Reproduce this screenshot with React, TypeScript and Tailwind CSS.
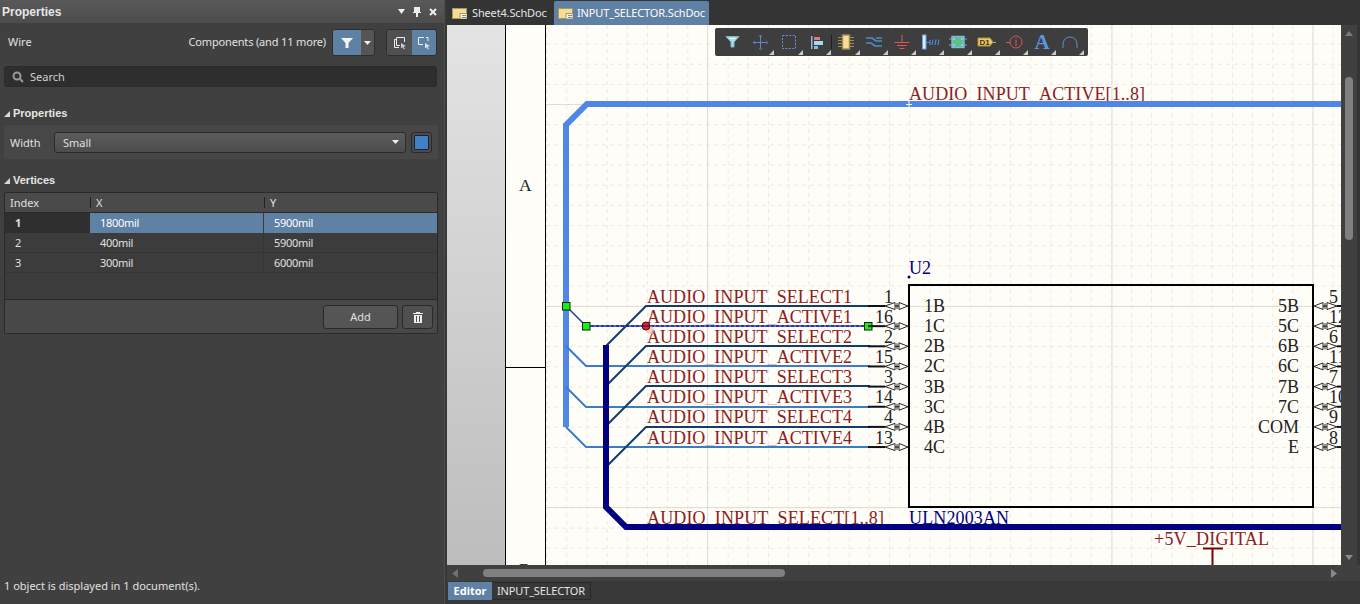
import type { ReactNode } from 'react'

const selectRows = [306, 346, 386, 427]
const activeRows = [366, 407, 447]
const netLabels = ['SELECT1', 'ACTIVE1', 'SELECT2', 'ACTIVE2', 'SELECT3', 'ACTIVE3', 'SELECT4', 'ACTIVE4']
const leftPins = [
  ['1', '1B'],
  ['16', '1C'],
  ['2', '2B'],
  ['15', '2C'],
  ['3', '3B'],
  ['14', '3C'],
  ['4', '4B'],
  ['13', '4C'],
]
const rightPins = [
  ['5', '5B'],
  ['12', '5C'],
  ['6', '6B'],
  ['11', '6C'],
  ['7', '7B'],
  ['10', '7C'],
  ['9', 'COM'],
  ['8', 'E'],
]
const vertices = [
  ['1', '1800mil', '5900mil'],
  ['2', '400mil', '5900mil'],
  ['3', '300mil', '6000mil'],
]
const serif = '"Liberation Serif", serif'
const arial = '"Liberation Sans", sans-serif'
const pinY = (i: number) => 306 + i * 20.15

function SectionTitle({ children }: { children: ReactNode }) {
  return (
    <div className="flex h-[14px] items-center gap-[3px] pl-[4px] text-[11px] font-bold leading-[14px] text-[#e6e6e6]" style={{ fontFamily: arial }}>
      <svg width="6" height="6" viewBox="0 0 6 6" className="mt-[1px]">
        <path d="M0 6 L6 0 V6 Z" fill="#d8d8d8" />
      </svg>
      {children}
    </div>
  )
}

function DocIcon() {
  return (
    <svg width="15" height="11" viewBox="0 0 15 11" className="shrink-0">
      <rect x="0.5" y="0.5" width="14" height="10" fill="#f6dd95" stroke="#a89868" />
      <rect x="8" y="5.5" width="7" height="5.5" fill="#fbf6df" stroke="#a89868" />
      <path d="M10 7.5 H14 M10 9.5 H14" stroke="#8f8a70" />
    </svg>
  )
}

function ToolIcon({ x, corner = true, children }: { x: number; corner?: boolean; children: ReactNode }) {
  return (
    <g transform={`translate(${x} 0)`}>
      {children}
      {corner && <path d="M9 13 L14 8 V13 Z" fill="#c9c9c9" />}
    </g>
  )
}

function Toolbar() {
  return (
    <div className="absolute left-[268px] top-[3px] h-[28px] w-[373px] rounded-[2px] bg-[#3e3e3e]">
      <svg width="373" height="28" viewBox="0 -14 373 28" className="block">
        <ToolIcon x={17.5} corner={false}>
          <path d="M-6.5 -5.5 H6.5 L1.5 0 V5 H-1.5 V0 Z" fill="#a6dbe8" stroke="#7fb4c4" />
          <path d="M-3 -3.5 H3" stroke="#e8f8fc" />
        </ToolIcon>
        <ToolIcon x={45}>
          <path d="M-6.5 0.5 H6.5 M0.5 -6.5 V6.5" stroke="#5f86d0" />
          <path d="M-5 -1 L-7 0.5 L-5 2 M6 -1 L8 0.5 L6 2 M-1 -5 L0.5 -7 L2 -5 M-1 6 L0.5 8 L2 6" fill="none" stroke="#5f86d0" strokeWidth="0.7" />
        </ToolIcon>
        <ToolIcon x={74}>
          <rect x="-6.5" y="-6.5" width="13" height="13" fill="none" stroke="#6d8fe0" strokeDasharray="2 1.4" />
        </ToolIcon>
        <ToolIcon x={102}>
          <rect x="-6" y="-6" width="1.5" height="13" fill="#8fb8e8" />
          <rect x="-3" y="-5" width="6" height="3" fill="#e87878" />
          <rect x="-3" y="-1" width="9" height="4" fill="#a6dbe8" />
          <rect x="-3" y="4" width="4" height="3" fill="#8fb8e8" />
        </ToolIcon>
        <path d="M116.5 -7 V7" stroke="#202020" />
        <ToolIcon x={131}>
          <path d="M-8 -4.5 H8 M-8 -1.5 H8 M-8 1.5 H8 M-8 4.5 H8" stroke="#a08c50" />
          <rect x="-3.5" y="-7" width="7" height="14" fill="#f8dc98" stroke="#a08c50" strokeWidth="1.4" />
        </ToolIcon>
        <ToolIcon x={159}>
          <path d="M-8 -4 H-2 L2 -1 H8 M-8 1 H-3 L1 4 H8 M2 -4 H8" fill="none" stroke="#4f8bc8" strokeWidth="1.6" />
        </ToolIcon>
        <ToolIcon x={187}>
          <path d="M0 -7 V0 M-7.5 0.5 H7.5 M-5 3.5 H5 M-2.5 6.5 H2.5" stroke="#e2574c" />
        </ToolIcon>
        <ToolIcon x={215}>
          <rect x="-7.5" y="-7" width="3.5" height="14" fill="#d8eafa" stroke="#6da4e0" />
          <path d="M-4 0.5 H0 M0 -2 V3 M2 3 L3 -2.5 M5 3 L6 -2.5 M8 3 L9 -2.5" stroke="#4f86e0" strokeWidth="1.2" fill="none" />
        </ToolIcon>
        <ToolIcon x={243}>
          <path d="M-9 -3 H-6 M6 -3 H9 M-9 3 H-6 M6 3 H9" stroke="#6da4e0" />
          <rect x="-6" y="-5.5" width="12" height="11" fill="#5cc08c" stroke="#7fb8f0" strokeWidth="1.4" />
          <path d="M-5 -3 H-3 M3 -3 H5 M-5 3 H-3 M3 3 H5" stroke="#f0e090" />
        </ToolIcon>
        <ToolIcon x={271}>
          <path d="M-8 -4 H4 L7 0 L4 4 H-8 Z" fill="#e8cc68" stroke="#a89040" />
          <path d="M7 0.5 H10" stroke="#c8a850" />
          <text x="-6.5" y="3" fontSize="8" fontFamily={arial} fontWeight="700" fill="#403010">
            D1
          </text>
        </ToolIcon>
        <ToolIcon x={299}>
          <circle cx="2" cy="0" r="6" fill="none" stroke="#d85858" />
          <path d="M-8 0.5 H-4 M2 -2 V4 M2 -4 V-3" stroke="#d85858" />
        </ToolIcon>
        <ToolIcon x={327}>
          <text x="-7.5" y="7" fontSize="21" fontFamily={serif} fontWeight="700" fill="#5a95e0">
            A
          </text>
        </ToolIcon>
        <ToolIcon x={355}>
          <path d="M-7 6 V2 A7 7 0 0 1 7 2 V6" fill="none" stroke="#5a8fd8" />
        </ToolIcon>
      </svg>
    </div>
  )
}

function Pin({ y, right = false }: { y: number; right?: boolean }) {
  return (
    <g transform={right ? `translate(1314 ${y})` : `translate(908 ${y}) scale(-1 1)`}>
      <path d="M0 0 L9 -3.5 V3.5 Z M11 -3 V3 M13 -3.5 L23 0 L13 3.5 Z" fill="#fffdf8" stroke="#111" strokeWidth="0.9" />
      <path d="M9 0 H13" stroke="#111" />
      <path d={right ? 'M23 0 H30' : 'M23 0 H40'} stroke="#111" strokeWidth="2" />
    </g>
  )
}

function Handle({ x, y }: { x: number; y: number }) {
  return <rect x={x - 3.5} y={y - 3.5} width="7.5" height="7.5" fill="#1cf010" stroke="#0b2a0b" />
}

function Schematic() {
  const minorX = Array.from({ length: 40 }, (_, i) => 546.6 + i * 20.17)
  const minorY = Array.from({ length: 27 }, (_, i) => 44 + i * 20.17)
  return (
    <svg width="836" height="540" viewBox="505 25 836 540" className="block h-[540px] w-[836px] bg-[#fffdf8]">
      {minorX.map((x) => (
        <line key={x} x1={x} x2={x} y1="25" y2="565" stroke="#ece9e0" strokeDasharray="4 4" />
      ))}
      {minorY.map((y) => (
        <line key={y} x1="546" x2="1341" y1={y} y2={y} stroke="#ece9e0" strokeDasharray="4 4" />
      ))}
      {[707.5, 1112, 1313].map((x) => (
        <line key={x} x1={x} x2={x} y1="25" y2="565" stroke="#dfddd6" />
      ))}
      {[104.5, 306.5, 507.5].map((y) => (
        <line key={y} x1="546" x2="1341" y1={y} y2={y} stroke="#dfddd6" />
      ))}

      <path d="M505.5 25 V565 M545.5 25 V565 M505 367.5 H545" stroke="#000" fill="none" />
      <text x="519" y="191" fontFamily={serif} fontSize="17.5" fill="#222">
        A
      </text>
      <text x="519" y="575" fontFamily={serif} fontSize="17.5" fill="#222">
        B
      </text>

      {/* underscores sit under the wires in the original, so they barely show */}
      <g fontFamily={serif} fontSize="18" fill="#8c2020">
        <text x="909" y="100" textLength="236">
          AUDIO<tspan fillOpacity="0.15">_</tspan>INPUT<tspan fillOpacity="0.15">_</tspan>ACTIVE[1..8]
        </text>
        {netLabels.map((label, i) => {
          const faint = label.startsWith('ACTIVE') ? 0.3 : 0
          return (
            <text key={label} x="647" y={302.5 + i * 20.15} textLength="205">
              AUDIO<tspan fillOpacity={faint}>_</tspan>INPUT<tspan fillOpacity={faint}>_</tspan>
              {label}
            </text>
          )
        })}
        <text x="647" y="523.5" textLength="237">
          AUDIO<tspan fillOpacity="0">_</tspan>INPUT<tspan fillOpacity="0">_</tspan>SELECT[1..8]
        </text>
        <text x="1154" y="544.5" textLength="115">
          +5V_DIGITAL
        </text>
      </g>

      <path d="M1341 104 H587 L566 125 V427" fill="none" stroke="#5087e6" strokeWidth="6" />
      {activeRows.map((y) => (
        <path key={y} d={`M566 ${y - 20} L586 ${y} H870`} fill="none" stroke="#3b7cc4" strokeWidth="2" />
      ))}
      {selectRows.map((y) => (
        <path key={y} d={`M606 ${y + 40} L646 ${y} H870`} fill="none" stroke="#0f3d6e" strokeWidth="2" />
      ))}
      <path d="M606 345 V507 L626 527 H1341" fill="none" stroke="#000080" strokeWidth="6" />

      <path d="M566 306 L586 326 H868" fill="none" stroke="#1a3fc0" strokeWidth="1.5" />
      <path d="M586 326 H868" fill="none" stroke="#000090" strokeDasharray="3 2" />
      <circle cx="650" cy="330" r="4" fill="#f0c0b8" fillOpacity="0.7" />
      <circle cx="646" cy="326" r="4" fill="#ec2020" stroke="#401010" />
      <path d="M642 326 H650" stroke="#000090" />
      <Handle x={566} y={306} />
      <Handle x={586} y={326} />
      <Handle x={868} y={326} />
      <path d="M906 104.5 H912 M909 101 V108" stroke="#fff" />

      <rect x="909" y="285" width="404" height="222" fill="none" stroke="#000" strokeWidth="2" />
      {leftPins.map(([num], i) => (
        <Pin key={num} y={pinY(i)} />
      ))}
      {rightPins.map(([num], i) => (
        <Pin key={num} y={pinY(i)} right />
      ))}
      <g fontFamily={serif} fontSize="18" fill="#222">
        {leftPins.map(([num, name], i) => (
          <g key={num}>
            <text x="893" y={302.5 + i * 20.15} textAnchor="end">
              {num}
            </text>
            <text x="924" y={312 + i * 20.15}>
              {name}
            </text>
          </g>
        ))}
        {rightPins.map(([num, name], i) => (
          <g key={num}>
            <text x="1329" y={302.5 + i * 20.15}>
              {num}
            </text>
            <text x="1299" y={312 + i * 20.15} textAnchor="end">
              {name}
            </text>
          </g>
        ))}
      </g>
      <g fontFamily={serif} fontSize="18" fill="#000080">
        <text x="909" y="274">
          U2
        </text>
        <text x="909" y="523.5" textLength="100">
          ULN2003AN
        </text>
      </g>
      <circle cx="909" cy="277" r="1.5" fill="#000080" />
      <path d="M1203 548.5 H1223 M1212.5 548 V565" stroke="#800000" strokeWidth="2" />
    </svg>
  )
}

function PropertiesPanel() {
  return (
    <div className="flex h-[604px] w-[444px] shrink-0 flex-col bg-[#404040] text-[11px] leading-[14px] text-[#e0e0e0]">
      <div className="flex h-[23px] shrink-0 items-center justify-between bg-gradient-to-b from-[#595959] to-[#4c4c4c] pl-[2px] pr-[7px]">
        <span className="text-[12px] font-bold text-[#e6e6e6]" style={{ fontFamily: arial }}>
          Properties
        </span>
        <div className="flex items-center gap-[8px]">
          <svg width="7" height="5" viewBox="0 0 7 5">
            <path d="M0 0 H7 L3.5 5 Z" fill="#eee" />
          </svg>
          <svg width="8" height="10" viewBox="0 0 8 10">
            <path d="M1 0 H7 V5 H8 V6 H5 V10 H3 V6 H0 V5 H1 Z" fill="#eee" />
          </svg>
          <svg width="8" height="8" viewBox="0 0 8 8">
            <path d="M1 1 L7 7 M7 1 L1 7" stroke="#eee" strokeWidth="2" />
          </svg>
        </div>
      </div>

      <div className="mt-[6px] flex h-[27px] shrink-0 items-center pl-[8px] pr-[7px]">
        <span className="mb-[2px]">Wire</span>
        <span className="mb-[2px] ml-auto tracking-[-0.16px]">Components (and 11 more)</span>
        <div className="ml-[6px] flex h-[27px] overflow-hidden rounded-[3px] border border-[#2e2e2e]">
          <div className="flex w-[28px] items-center justify-center bg-[#5f81a3]">
            <svg width="12" height="12" viewBox="0 0 12 12">
              <path d="M0 1 H12 L7.5 6 V11 H4.5 V6 Z" fill="#f4f4f4" />
            </svg>
          </div>
          <div className="flex w-[13px] items-center justify-center bg-[#555]">
            <svg width="7" height="4" viewBox="0 0 7 4">
              <path d="M0 0 H7 L3.5 4 Z" fill="#eee" />
            </svg>
          </div>
        </div>
        <div className="ml-[11px] flex h-[27px] overflow-hidden rounded-[3px] border border-[#2e2e2e]">
          <div className="flex w-[25px] items-center justify-center bg-[#505050]">
            <svg width="14" height="14" viewBox="0 0 14 14" fill="none" stroke="#eee">
              <path d="M3.5 3.5 H1.5 V11.5 H6 M4 1.5 H11.5 V6 M3.5 1.5 V9.5 H7" />
              <path d="M8 7 L13 10 L10.5 10.7 L12 13 L11 13.5 L9.6 11.2 L8 12.5 Z" fill="#bcd" stroke="none" />
            </svg>
          </div>
          <div className="flex w-[24px] items-center justify-center bg-[#5f81a3]">
            <svg width="14" height="14" viewBox="0 0 14 14" fill="none" stroke="#eee">
              <path d="M7 1.5 H1.5 V8.5 H6 M9 1.5 H11 V5" />
              <path d="M8 7 L13 10 L10.5 10.7 L12 13 L11 13.5 L9.6 11.2 L8 12.5 Z" fill="#dde" stroke="none" />
            </svg>
          </div>
        </div>
      </div>

      <div className="mx-[4px] mt-[10px] flex h-[21px] w-[433px] shrink-0 items-center gap-[6px] rounded-[3px] border border-[#2a2a2a] bg-[#2e2e2e] pl-[7px] text-[#d0d0d0]">
        <svg width="12" height="12" viewBox="0 0 12 12" fill="none" stroke="#9a9a9a" strokeWidth="2">
          <circle cx="5" cy="5" r="3.5" />
          <path d="M8 8 L11 11" />
        </svg>
        Search
      </div>

      <div className="mt-[19px]">
        <SectionTitle>Properties</SectionTitle>
      </div>
      <div className="mx-[4px] mt-[5px] flex h-[34px] w-[434px] shrink-0 items-center rounded-[2px] bg-[#474747] pl-[6px]">
        <span className="mt-[2px] w-[44px]">Width</span>
        <div className="flex h-[21px] w-[352px] items-center justify-between rounded-[3px] border border-[#2a2a2a] bg-gradient-to-b from-[#5c5c5c] to-[#4c4c4c] pl-[8px] pr-[6px]">
          <span className="mt-[2px]">Small</span>
          <svg width="7" height="4" viewBox="0 0 7 4">
            <path d="M0 0 H7 L3.5 4 Z" fill="#eee" />
          </svg>
        </div>
        <div className="ml-[5px] flex h-[21px] w-[21px] items-center justify-center rounded-[3px] border border-[#2a2a2a] bg-[#4a4a4a]">
          <div className="h-[15px] w-[15px] rounded-[1px] border border-[#222] bg-[#3f80c6]" />
        </div>
      </div>

      <div className="mt-[14px]">
        <SectionTitle>Vertices</SectionTitle>
      </div>
      <div className="mx-[4px] mt-[5px] w-[434px] shrink-0 rounded-t-[2px] border border-[#2a2a2a] bg-[#3c3c3c]">
        <div className="flex h-[20px] items-center border-b border-[#2a2a2a] bg-[#4a4a4a]">
          <div className="w-[85px] pl-[5px]">Index</div>
          <div className="h-[11px] w-px bg-[#222]" />
          <div className="w-[173px] pl-[5px]">X</div>
          <div className="h-[11px] w-px bg-[#222]" />
          <div className="pl-[5px]">Y</div>
        </div>
        <div className="h-[86px] tracking-[-0.3px]">
          {vertices.map(([index, x, y], i) => {
            const selected = i === 0
            return (
              <div key={index} className={`flex h-[20px] items-center ${selected ? '' : 'border-b border-[#353535]'}`}>
                <div className={`flex h-full w-[85px] items-center pl-[10px] ${selected ? 'bg-[#2f2f2f] font-bold' : ''}`}>{index}</div>
                <div className={`flex h-full w-[174px] items-center border-r pl-[10px] ${selected ? 'border-[#3c3c3c] bg-[#5f81a3] text-white' : 'border-[#353535]'}`}>{x}</div>
                <div className={`flex h-full flex-1 items-center pl-[10px] ${selected ? 'bg-[#5f81a3] text-white' : ''}`}>{y}</div>
              </div>
            )
          })}
        </div>
      </div>
      <div className="mx-[4px] flex h-[34px] w-[434px] shrink-0 items-center justify-end gap-[4px] rounded-b-[2px] border border-t-0 border-[#2a2a2a] bg-[#484848] pr-[4px]">
        <div className="flex h-[24px] w-[75px] items-center justify-center rounded-[3px] border border-[#2a2a2a] bg-[#555]">Add</div>
        <div className="flex h-[24px] w-[31px] items-center justify-center rounded-[3px] border border-[#2a2a2a] bg-[#505050]">
          <svg width="10" height="12" viewBox="0 0 10 12">
            <path d="M0 2 H10 V3 H0 Z M3 1 H7 V2 H3 Z M1 4 H9 V12 H1 Z" fill="#eee" />
            <path d="M3.5 5 V11 M6.5 5 V11" stroke="#505050" />
          </svg>
        </div>
      </div>

      <div className="mt-auto pb-[11px] pl-[4px]">1 object is displayed in 1 document(s).</div>
    </div>
  )
}

export default function App() {
  return (
    <div className="flex h-[604px] w-[1360px] overflow-hidden bg-[#3a3a3a]" style={{ fontFamily: '"Noto Sans", sans-serif' }}>
      <PropertiesPanel />
      <div className="h-full w-[3px] shrink-0 border-l border-[#4c4c4c] bg-[#383838]" />
      <div className="flex min-w-0 flex-1 flex-col">
        <div className="flex h-[25px] shrink-0 items-end bg-[#343434] text-[11px] tracking-[-0.15px] text-[#e4e4e4]">
          <div className="flex h-[24px] w-[107px] items-center gap-[5px] pl-[5px]">
            <DocIcon />
            Sheet4.SchDoc
          </div>
          <div className="flex h-[24px] w-[155px] items-center gap-[4px] rounded-t-[2px] bg-[#5f81a3] pl-[4px] text-white">
            <DocIcon />
            INPUT_SELECTOR.SchDoc
          </div>
        </div>

        <div className="flex h-[540px] shrink-0">
          <div className="relative flex">
            <div className="w-[58px] bg-gradient-to-b from-[#e4e4e4] to-[#bdbdbd]" />
            <Schematic />
            <Toolbar />
          </div>
          <div className="flex w-[19px] flex-col border-r-[3px] border-[#353535] bg-[#404040] pb-[5px] pl-[4px] pt-[6px]">
            <svg width="8" height="5" viewBox="0 0 8 5">
              <path d="M0 5 L4 0 L8 5 Z" fill="#7a7a7a" />
            </svg>
            <div className="mt-[41px] h-[163px] w-[8px] rounded-[4px] bg-[#808080]" />
            <svg width="8" height="5" viewBox="0 0 8 5" className="mt-auto">
              <path d="M0 0 H8 L4 5 Z" fill="#8a8a8a" />
            </svg>
          </div>
        </div>

        <div className="flex h-[16px] shrink-0 items-center bg-[#404040] pl-[5px] pr-[23px]">
          <svg width="6" height="9" viewBox="0 0 6 9">
            <path d="M6 0 V9 L0 4.5 Z" fill="#707070" />
          </svg>
          <div className="ml-[25px] h-[8px] w-[302px] rounded-[4px] bg-[#808080]" />
          <svg width="6" height="9" viewBox="0 0 6 9" className="ml-auto">
            <path d="M0 0 V9 L6 4.5 Z" fill="#8a8a8a" />
          </svg>
        </div>

        <div className="flex h-[23px] shrink-0 items-start bg-[#383838] pt-px text-[11px] text-[#e4e4e4]">
          <div className="ml-px flex h-[18px] w-[44px] items-center justify-center bg-[#5f81a3] font-bold text-white">Editor</div>
          <div className="flex h-[18px] w-[99px] items-center justify-center border border-l-0 border-[#2a2a2a] tracking-[-0.15px]">INPUT_SELECTOR</div>
        </div>
      </div>
    </div>
  )
}
